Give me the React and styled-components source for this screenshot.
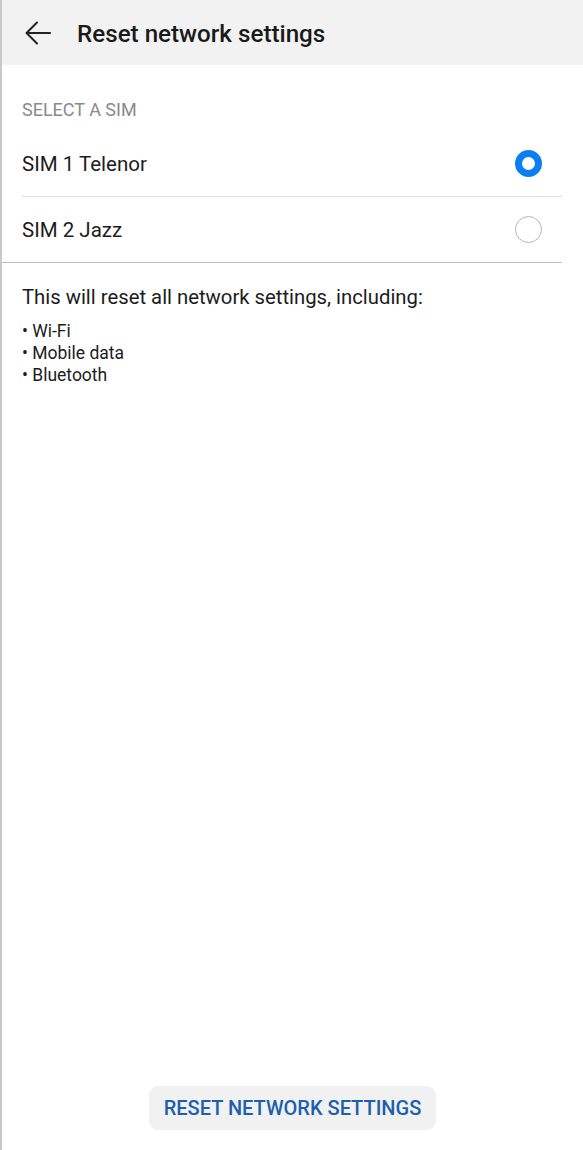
import React, { useState } from "react";
import styled, { createGlobalStyle } from "styled-components";

const GlobalStyle = createGlobalStyle`
  html, body {
    margin: 0;
    padding: 0;
    background: #ffffff;
  }
  body {
    font-family: Roboto, "Liberation Sans", Arial, sans-serif;
    color: #1c1c1c;
  }
`;

const sims = [
  { id: 1, label: "SIM 1 Telenor" },
  { id: 2, label: "SIM 2 Jazz" },
];

const items = ["Wi-Fi", "Mobile data", "Bluetooth"];

const App = () => {
  const [selected, setSelected] = useState(1);
  return (
    <>
      <GlobalStyle />
      <Page>
        <Header>
          <BackButton aria-label="Back">
            <svg width="26" height="24" viewBox="0 0 26 24" fill="none">
              <path
                d="M25 12H2M12 1.5L1.5 12L12 22.5"
                stroke="#222"
                strokeWidth="2"
                strokeLinecap="round"
                strokeLinejoin="round"
              />
            </svg>
          </BackButton>
          <Title>Reset network settings</Title>
        </Header>

        <Section>
          <SectionLabel>SELECT A SIM</SectionLabel>
          {sims.map((sim, index) => (
            <SimRow
              key={sim.id}
              $last={index === sims.length - 1}
              onClick={() => setSelected(sim.id)}
            >
              <SimName>{sim.label}</SimName>
              <Radio $checked={selected === sim.id} />
            </SimRow>
          ))}
        </Section>

        <Info>
          <InfoText>This will reset all network settings, including:</InfoText>
          <Bullets>
            {items.map((item) => (
              <li key={item}>• {item}</li>
            ))}
          </Bullets>
        </Info>

        <Footer>
          <ResetButton>RESET NETWORK SETTINGS</ResetButton>
        </Footer>
      </Page>
    </>
  );
};

const Page = styled.div`
  display: flex;
  flex-direction: column;
  min-height: 1150px;
  box-sizing: border-box;
  border-left: 2px solid #c9c9c9;
`;

const Header = styled.header`
  display: flex;
  align-items: center;
  height: 65px;
  box-sizing: border-box;
  padding-top: 2px;
  background: #f2f2f2;
  padding-left: 23px;
  gap: 26px;
`;

const BackButton = styled.button`
  display: flex;
  align-items: center;
  border: 0;
  background: none;
  padding: 0;
  margin-top: -2px;
  cursor: pointer;
`;

const Title = styled.h1`
  margin: 0;
  font-size: 24.2px;
  font-weight: 500;
  color: #1a1a1a;
  letter-spacing: 0;
`;

const Section = styled.section`
  display: flex;
  flex-direction: column;
  padding-top: 34px;
`;

const SectionLabel = styled.div`
  padding-left: 20px;
  font-size: 18px;
  color: #8a8a8a;
  line-height: 22px;
  margin-bottom: 10px;
`;

const SimRow = styled.div`
  display: flex;
  align-items: center;
  justify-content: space-between;
  height: 65px;
  margin-left: ${({ $last }) => ($last ? "0" : "20px")};
  padding-left: ${({ $last }) => ($last ? "20px" : "0")};
  margin-right: 21px;
  border-bottom: 1px solid ${({ $last }) => ($last ? "#bdbdbd" : "#dedede")};
  cursor: pointer;
`;

const SimName = styled.span`
  font-size: 20.5px;
  color: #1c1c1c;
`;

const Radio = styled.span`
  box-sizing: border-box;
  width: 27px;
  height: 27px;
  margin-right: 20px;
  border-radius: 50%;
  border: ${({ $checked }) =>
    $checked ? "7px solid #0a7ff2" : "1.5px solid #b5b5b5"};
  background: #fff;
`;

const Info = styled.div`
  padding: 20px 20px 0;
`;

const InfoText = styled.p`
  margin: 0;
  font-size: 20.3px;
  line-height: 28px;
  color: #1c1c1c;
`;

const Bullets = styled.ul`
  list-style: none;
  margin: 9px 0 0;
  padding: 0;
  li {
    font-size: 17.5px;
    line-height: 22px;
    color: #1c1c1c;
  }
`;

const Footer = styled.footer`
  margin-top: auto;
  display: flex;
  justify-content: center;
  padding-bottom: 20px;
`;

const ResetButton = styled.button`
  border: 0;
  background: #f1f1f1;
  border-radius: 9px;
  height: 44px;
  padding: 0 15px;
  font-family: Roboto, "Liberation Sans", Arial, sans-serif;
  font-size: 20px;
  font-weight: 500;
  color: #1c5fae;
  cursor: pointer;
`;

export default App;
